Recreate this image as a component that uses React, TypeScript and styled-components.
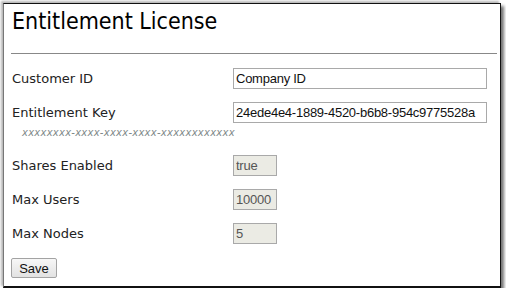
import styled, { createGlobalStyle } from "styled-components";

const GlobalStyle = createGlobalStyle`
  html, body {
    margin: 0;
    padding: 0;
    background: #fff;
  }
`;

const Panel = styled.div`
  box-sizing: border-box;
  margin: 3px 5px 0 3px;
  width: 498px;
  height: 285px;
  padding: 3px 3px 0 8px;
  background: #fff;
  border-top: 1px solid #111;
  border-right: 1px solid #111;
  border-bottom: 2px solid #111;
  border-left: 1px solid #777;
  box-shadow: -2px -2px 2px rgba(0, 0, 0, 0.28), 3px 3px 3px rgba(0, 0, 0, 0.55);
  font-family: "DejaVu Sans", Verdana, sans-serif;
`;

const Title = styled.h1`
  margin: 0;
  font-family: "DejaVu Sans Condensed", "DejaVu Sans", Verdana, sans-serif;
  font-stretch: condensed;
  font-size: 23px;
  line-height: 28px;
  font-weight: normal;
  color: #000;
`;

const Rule = styled.hr`
  margin: 18px 0 14px -1px;
  border: 0;
  border-top: 1px solid #888;
  height: 0;
`;

const Row = styled.div<{ $gap?: number }>`
  display: grid;
  grid-template-columns: 221px auto;
  align-items: center;
  height: 21px;
  margin-bottom: ${(p) => (p.$gap ?? 13)}px;
`;

const Label = styled.label`
  font-size: 13px;
  color: #222;
`;

const Field = styled.input<{ $small?: boolean }>`
  box-sizing: border-box;
  width: ${(p) => (p.$small ? "44px" : "254px")};
  height: 21px;
  padding: 0 2px;
  border: 1px solid #a9a9a9;
  background: ${(p) => (p.$small ? "#ebebe4" : "#fff")};
  color: ${(p) => (p.$small ? "#555" : "#111")};
  font-family: "Liberation Sans", Arial, sans-serif;
  font-size: 13px;
  letter-spacing: -0.25px;
  outline: none;
`;

const Hint = styled.div`
  height: 32px;
  box-sizing: border-box;
  padding: 3px 0 0 10px;
  font-size: 10px;
  line-height: 14px;
  font-style: italic;
  letter-spacing: 0.25px;
  color: #7f8a8a;
`;

const SaveButton = styled.button`
  box-sizing: border-box;
  width: 46px;
  height: 20px;
  margin: 1px 0 0 -1px;
  padding: 0;
  border: 1px solid #a3a3a3;
  border-radius: 2px;
  background: linear-gradient(#f7f7f7, #e2e2e2);
  font-family: "Liberation Sans", Arial, sans-serif;
  font-size: 13px;
  color: #111;
`;

export default function App() {
  return (
    <>
      <GlobalStyle />
      <Panel>
        <Title>Entitlement License</Title>
        <Rule />
        <Row>
          <Label>Customer ID</Label>
          <Field defaultValue="Company ID" />
        </Row>
        <Row $gap={0}>
          <Label>Entitlement Key</Label>
          <Field defaultValue="24ede4e4-1889-4520-b6b8-954c9775528a" />
        </Row>
        <Hint>xxxxxxxx-xxxx-xxxx-xxxx-xxxxxxxxxxxx</Hint>
        <Row>
          <Label>Shares Enabled</Label>
          <Field $small disabled defaultValue="true" />
        </Row>
        <Row>
          <Label>Max Users</Label>
          <Field $small disabled defaultValue="10000" />
        </Row>
        <Row>
          <Label>Max Nodes</Label>
          <Field $small disabled defaultValue="5" />
        </Row>
        <SaveButton>Save</SaveButton>
      </Panel>
    </>
  );
}
